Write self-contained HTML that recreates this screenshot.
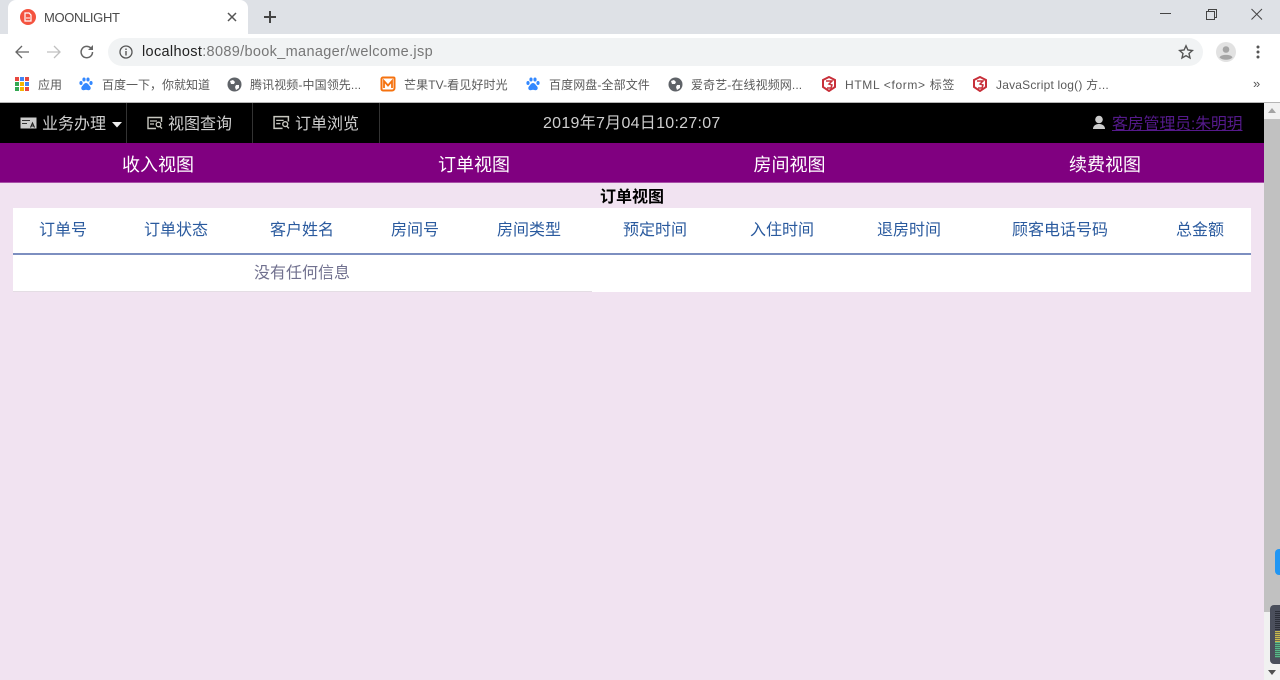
<!DOCTYPE html>
<html lang="zh">
<head>
<meta charset="utf-8">
<title>MOONLIGHT</title>
<style>
html,body{margin:0;padding:0;width:1280px;height:680px;overflow:hidden;background:#f1e3f1;font-family:"Liberation Sans","Noto Sans CJK SC",sans-serif}
.a{position:absolute;white-space:nowrap;line-height:1}
svg{position:absolute;display:block}
.bm{font-size:12px;color:#5a5a5a;top:79px}
.nav{font-size:16px;color:#cfcfcf;top:117px}
.pv{font-size:18px;color:#fff;top:156px}
.th{font-size:16px;color:#2a5a9e;top:223px}
</style>
</head>
<body>
<!-- tab strip -->
<div class="a" style="left:0;top:0;width:1280px;height:34px;background:#dee1e6"></div>
<div class="a" style="left:8px;top:0;width:240px;height:34px;background:#fff;border-radius:8px 8px 0 0"></div>
<svg style="left:20px;top:9px" width="16" height="16" viewBox="0 0 16 16"><circle cx="8" cy="8" r="8" fill="#f4533f"/><path d="M5 4h4l2 2v6H5z" fill="none" stroke="#fff" stroke-width="1.2"/><path d="M6 9h4" stroke="#fff"/></svg>
<div class="a" style="left:44px;top:11px;font-size:13px;letter-spacing:-.35px;color:#4a4a4a">MOONLIGHT</div>
<svg style="left:227px;top:12px" width="10" height="10" viewBox="0 0 10 10"><path d="M1 1l8 8M9 1l-8 8" stroke="#555" stroke-width="1.500"/></svg>
<svg style="left:263px;top:10px" width="14" height="14" viewBox="0 0 14 14"><path d="M7 1v12M1 7h12" stroke="#444" stroke-width="2"/></svg>
<svg style="left:1160px;top:7px" width="110" height="14" viewBox="0 0 110 14"><path d="M0 6.500h11" stroke="#444"/><path d="M46.500 4.500h8v8h-8zM48.500 4.500v-2h8v8h-2" fill="none" stroke="#444"/><path d="M91.500 2l10.500 10.500M102 2L91.500 12.500" stroke="#444"/></svg>
<!-- toolbar -->
<div class="a" style="left:0;top:34px;width:1280px;height:68px;background:#fff"></div>
<div class="a" style="left:0;top:102px;width:1280px;height:1px;background:#b5b5b5"></div>
<svg style="left:14px;top:44px" width="16" height="16" viewBox="0 0 16 16"><path d="M15 8H2M8 2L2 8l6 6" fill="none" stroke="#666" stroke-width="1.300"/></svg>
<svg style="left:46px;top:44px" width="16" height="16" viewBox="0 0 16 16"><path d="M1 8h13M8 2l6 6-6 6" fill="none" stroke="#c0c0c0" stroke-width="1.300"/></svg>
<svg style="left:79px;top:44px" width="16" height="16" viewBox="0 0 16 16"><path d="M13.500 8a5.700 5.700 0 1 1-1.700-4" fill="none" stroke="#666" stroke-width="1.500"/><path d="M14 1v5H9z" fill="#666"/></svg>
<div class="a" style="left:108px;top:38px;width:1095px;height:28px;background:#f1f3f4;border-radius:14px"></div>
<svg style="left:119px;top:45px" width="14" height="14" viewBox="0 0 14 14"><circle cx="7" cy="7" r="6" fill="none" stroke="#555" stroke-width="1.300"/><path d="M7 6v4.500M7 3.500v1.500" stroke="#555" stroke-width="1.400"/></svg>
<div class="a" style="left:142px;top:45px;font-size:14.500px;letter-spacing:.33px;color:#777"><span style="color:#222">localhost</span>:8089/book_manager/welcome.jsp</div>
<svg style="left:1178px;top:44px" width="16" height="16" viewBox="0 0 16 16"><path d="M8 1.800l1.900 4.200 4.500.5-3.400 3 1 4.500L8 11.700 4 14l1-4.500-3.400-3 4.500-.5z" fill="none" stroke="#555" stroke-width="1.400"/></svg>
<svg style="left:1216px;top:42px" width="20" height="20" viewBox="0 0 20 20"><circle cx="10" cy="10" r="10" fill="#e2e2e2"/><circle cx="10" cy="7.500" r="3.300" fill="#a5a5a5"/><path d="M3.500 15.500c1-3.500 12-3.500 13 0-3 3-10 3-13 0z" fill="#a5a5a5"/></svg>
<svg style="left:1256px;top:45px" width="4" height="14" viewBox="0 0 4 14"><circle cx="2" cy="2" r="1.500" fill="#555"/><circle cx="2" cy="7" r="1.500" fill="#555"/><circle cx="2" cy="12" r="1.500" fill="#555"/></svg>
<!-- bookmarks -->
<svg style="left:15px;top:77px" width="14" height="14" viewBox="0 0 14 14"><g><rect x="0" y="0" width="4" height="4" fill="#e8483f"/><rect x="5" y="0" width="4" height="4" fill="#4285f4"/><rect x="10" y="0" width="4" height="4" fill="#e8483f"/><rect x="0" y="5" width="4" height="4" fill="#34a853"/><rect x="5" y="5" width="4" height="4" fill="#f4b400"/><rect x="10" y="5" width="4" height="4" fill="#4285f4"/><rect x="0" y="10" width="4" height="4" fill="#34a853"/><rect x="5" y="10" width="4" height="4" fill="#f4b400"/><rect x="10" y="10" width="4" height="4" fill="#e8483f"/></g></svg>
<div class="a bm" style="left:38px">应用</div>
<svg style="left:79px;top:77px" width="14" height="15" viewBox="0 0 14 15"><g fill="#3388ff"><ellipse cx="2" cy="6" rx="1.600" ry="2"/><ellipse cx="5" cy="2.500" rx="1.600" ry="2"/><ellipse cx="9" cy="2.500" rx="1.600" ry="2"/><ellipse cx="12" cy="6" rx="1.600" ry="2"/><path d="M7 6c2 0 2.500 2 4 3.200 1.500 1.800.5 4-1.500 4-1 0-1.700-.4-2.500-.4s-1.500.4-2.500.4c-2 0-3-2.200-1.500-4C4.500 8 5 6 7 6z"/></g></svg>
<div class="a bm" style="left:102px">百度一下，你就知道</div>
<svg style="left:227px;top:77px" width="15" height="15" viewBox="0 0 15 15"><circle cx="7.500" cy="7.500" r="7" fill="#5f6368"/><path d="M3 4l3-1 2 2-1 2-3 0zM9 8l3 0 0 3-3 2-1-3z" fill="#fff"/></svg>
<div class="a bm" style="left:250px;letter-spacing:.1px">腾讯视频-中国领先...</div>
<svg style="left:380px;top:76px" width="16" height="16" viewBox="0 0 16 16"><path d="M3 1.500h10.500a1 1 0 0 1 1 1V12a2.500 2.500 0 0 1-2.500 2.500H3A1.500 1.500 0 0 1 1.500 13V3A1.500 1.500 0 0 1 3 1.500z" fill="#fff" stroke="#f5720f" stroke-width="2"/><path d="M4 12V5l4 4.500L12 5v7" fill="none" stroke="#f5720f" stroke-width="1.800"/></svg>
<div class="a bm" style="left:404px;letter-spacing:.1px">芒果TV-看见好时光</div>
<svg style="left:526px;top:77px" width="14" height="15" viewBox="0 0 14 15"><g fill="#3388ff"><ellipse cx="2" cy="6" rx="1.600" ry="2"/><ellipse cx="5" cy="2.500" rx="1.600" ry="2"/><ellipse cx="9" cy="2.500" rx="1.600" ry="2"/><ellipse cx="12" cy="6" rx="1.600" ry="2"/><path d="M7 6c2 0 2.500 2 4 3.200 1.500 1.800.5 4-1.500 4-1 0-1.700-.4-2.500-.4s-1.500.4-2.500.4c-2 0-3-2.200-1.500-4C4.500 8 5 6 7 6z"/></g></svg>
<div class="a bm" style="left:549px;letter-spacing:.1px">百度网盘-全部文件</div>
<svg style="left:668px;top:77px" width="15" height="15" viewBox="0 0 15 15"><circle cx="7.500" cy="7.500" r="7" fill="#5f6368"/><path d="M3 4l3-1 2 2-1 2-3 0zM9 8l3 0 0 3-3 2-1-3z" fill="#fff"/></svg>
<div class="a bm" style="left:691px;letter-spacing:.1px">爱奇艺-在线视频网...</div>
<svg style="left:821px;top:76px" width="16" height="16" viewBox="0 0 16 16"><path d="M8 1l6 3v7l-6 4-6-4V4z" fill="none" stroke="#c8303a" stroke-width="2"/><path d="M5 5h6L8 8l3 1-1 3H6" fill="none" stroke="#c8303a" stroke-width="1.500"/></svg>
<div class="a bm" style="left:845px;letter-spacing:.65px">HTML &lt;form&gt; 标签</div>
<svg style="left:972px;top:76px" width="16" height="16" viewBox="0 0 16 16"><path d="M8 1l6 3v7l-6 4-6-4V4z" fill="none" stroke="#c8303a" stroke-width="2"/><path d="M5 5h6L8 8l3 1-1 3H6" fill="none" stroke="#c8303a" stroke-width="1.500"/></svg>
<div class="a bm" style="left:996px;letter-spacing:.2px">JavaScript log() 方...</div>
<div class="a" style="left:1253px;top:77px;font-size:13px;color:#555">»</div>
<!-- black nav -->
<div class="a" style="left:0;top:103px;width:1264px;height:40px;background:#000"></div>
<div class="a" style="left:126px;top:103px;width:1px;height:40px;background:#333"></div>
<div class="a" style="left:252px;top:103px;width:1px;height:40px;background:#333"></div>
<div class="a" style="left:379px;top:103px;width:1px;height:40px;background:#333"></div>
<svg style="left:20px;top:116px" width="17" height="14" viewBox="0 0 17 14"><rect x="0.500" y="1.500" width="16" height="11" fill="#ccc"/><path d="M2 4.500h8M2 7.500h5" stroke="#333"/><path d="M10.500 11.500l2-4.500 2 4.500M11 10h3" fill="none" stroke="#222" stroke-width="1.100"/></svg>
<div class="a nav" style="left:42px">业务办理</div>
<svg style="left:112px;top:122px" width="10" height="6" viewBox="0 0 10 6"><path d="M0 0h10L5 5.500z" fill="#eee"/></svg>
<svg style="left:147px;top:116px" width="16" height="14" viewBox="0 0 16 14"><path d="M14.500 6V1.500H1v11h8" fill="none" stroke="#c8c8c0" stroke-width="1.400"/><path d="M3 5h7M3 8h4" stroke="#c8c8c0" stroke-width="1.200"/><circle cx="11.500" cy="8.500" r="2.300" fill="none" stroke="#c8c8c0" stroke-width="1.300"/><path d="M13 10.500l2 2" stroke="#c8c8c0" stroke-width="1.300"/></svg>
<div class="a nav" style="left:168px">视图查询</div>
<svg style="left:273px;top:115px" width="17" height="15" viewBox="0 0 16 14"><path d="M14.500 6V1.500H1v11h8" fill="none" stroke="#c8c8c0" stroke-width="1.400"/><path d="M3 5h7M3 8h4" stroke="#c8c8c0" stroke-width="1.200"/><circle cx="11.500" cy="8.500" r="2.300" fill="none" stroke="#c8c8c0" stroke-width="1.300"/><path d="M13 10.500l2 2" stroke="#c8c8c0" stroke-width="1.300"/></svg>
<div class="a nav" style="left:295px">订单浏览</div>
<div class="a nav" style="left:543px;top:116px;letter-spacing:.28px">2019年7月04日10:27:07</div>
<svg style="left:1093px;top:115px" width="12" height="15" viewBox="0 0 12 15"><circle cx="6" cy="4.500" r="3.800" fill="#ccc"/><path d="M0 14c0-3.500 3-5 6-5s6 1.500 6 5z" fill="#ccc"/></svg>
<div class="a nav" style="left:1112px;letter-spacing:-.22px;color:#551a8b;text-decoration:underline">客房管理员:朱明玥</div>
<!-- purple -->
<div class="a" style="left:0;top:143px;width:1264px;height:39px;background:#800080"></div>
<div class="a" style="left:0;top:182px;width:1264px;height:1px;background:#a850a8"></div>
<div class="a pv" style="left:122px">收入视图</div>
<div class="a pv" style="left:438px">订单视图</div>
<div class="a pv" style="left:753.500px">房间视图</div>
<div class="a pv" style="left:1069px">续费视图</div>
<!-- content -->
<div class="a" style="left:600px;top:190px;font-size:16px;font-weight:bold;color:#000">订单视图</div>
<div class="a" style="left:13px;top:208px;width:1238px;height:84px;background:#fff"></div>
<div class="a" style="left:13px;top:253px;width:1238px;height:2px;background:#7d8fc0"></div>
<div class="a" style="left:13px;top:291px;width:579px;height:1px;background:#e4dde4"></div>
<div class="a th" style="left:39px">订单号</div>
<div class="a th" style="left:144px">订单状态</div>
<div class="a th" style="left:270px">客户姓名</div>
<div class="a th" style="left:391px">房间号</div>
<div class="a th" style="left:497px">房间类型</div>
<div class="a th" style="left:623px">预定时间</div>
<div class="a th" style="left:750px">入住时间</div>
<div class="a th" style="left:877px">退房时间</div>
<div class="a th" style="left:1012px">顾客电话号码</div>
<div class="a th" style="left:1176px">总金额</div>
<div class="a" style="left:254px;top:266px;font-size:16px;color:#71718f">没有任何信息</div>
<!-- scrollbar -->
<div class="a" style="left:1264px;top:103px;width:16px;height:577px;background:#f1f1f1"></div>
<div class="a" style="left:1264px;top:119px;width:16px;height:493px;background:#c1c1c1"></div>
<svg style="left:1268px;top:108px" width="8" height="5" viewBox="0 0 8 5"><path d="M4 0l4 5H0z" fill="#a3a3a3"/></svg>
<svg style="left:1268px;top:670px" width="8" height="5" viewBox="0 0 8 5"><path d="M4 5L0 0h8z" fill="#505050"/></svg>
<!-- floating widgets -->
<div class="a" style="left:1275px;top:549px;width:5px;height:26px;background:#2196f3;border-radius:4px 0 0 4px"></div>
<div class="a" style="left:1270px;top:605px;width:10px;height:59px;background:#4b4f5c;border-radius:4px 0 0 4px"></div>
<div class="a" style="left:1275px;top:611px;width:5px;height:20px;background:repeating-linear-gradient(#2b2e38 0 1px,#4b4f5c 1px 2px)"></div>
<div class="a" style="left:1275px;top:631px;width:5px;height:11px;background:repeating-linear-gradient(#c9b94f 0 1px,#6d6d50 1px 2px)"></div>
<div class="a" style="left:1275px;top:642px;width:5px;height:16px;background:repeating-linear-gradient(#58b98a 0 1px,#46705f 1px 2px)"></div>
</body>
</html>
